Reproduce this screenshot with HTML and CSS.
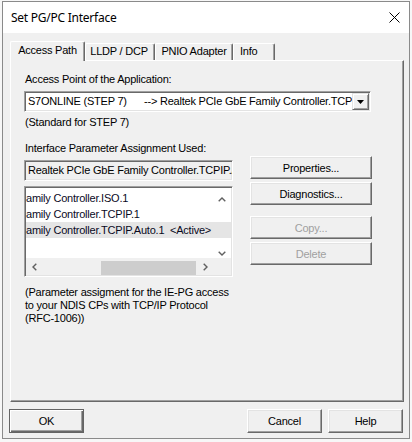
FILE: index.html
```html
<!DOCTYPE html>
<html>
<head>
<meta charset="utf-8">
<link rel="stylesheet" href="styles.css">
</head>
<body>
<div class="window">
  <div class="titlebar">
    <span class="title">Set PG/PC Interface</span>
    <svg class="close" width="11" height="11" viewBox="0 0 11 11"><path d="M0.5 0.5 L10.5 10.5 M10.5 0.5 L0.5 10.5" stroke="#000" stroke-width="1" fill="none"/></svg>
  </div>
  <div class="client">
    <div class="tabs">
      <div class="tab active tab-access">Access Path</div>
      <div class="tab tab-lldp">LLDP / DCP</div>
      <div class="tab tab-pnio">PNIO Adapter</div>
      <div class="tab tab-info">Info</div>
    </div>
    <div class="panel">
      <div class="label">Access Point of the Application:</div>
      <div class="combo">
        <div class="combo-text"><span class="combo-first">S7ONLINE (STEP 7)</span>--&gt; Realtek PCIe GbE Family Controller.TCPIP.Auto.1</div>
        <div class="combo-btn"><svg width="7" height="4" viewBox="0 0 7 4"><polygon points="0,0 7,0 3.5,4" fill="#000"/></svg></div>
      </div>
      <div class="note">(Standard for STEP 7)</div>
      <div class="label label2">Interface Parameter Assignment Used:</div>
      <div class="row">
        <div class="leftcol">
          <div class="field">Realtek PCIe GbE Family Controller.TCPIP.Auto.1</div>
          <div class="listbox">
            <div class="items">
              <div class="item">amily Controller.ISO.1</div>
              <div class="item">amily Controller.TCPIP.1</div>
              <div class="item selected">amily Controller.TCPIP.Auto.1&nbsp;&nbsp;&lt;Active&gt;</div>
            </div>
            <div class="vscroll">
              <svg width="8" height="5" viewBox="0 0 8 5"><path d="M0.7 4.3 L4 1 L7.3 4.3" stroke="#606060" stroke-width="1.4" fill="none"/></svg>
              <svg width="8" height="5" viewBox="0 0 8 5"><path d="M0.7 0.7 L4 4 L7.3 0.7" stroke="#606060" stroke-width="1.4" fill="none"/></svg>
            </div>
            <div class="hscroll">
              <svg class="harrow" width="5" height="8" viewBox="0 0 5 8"><path d="M4.3 0.7 L1 4 L4.3 7.3" stroke="#606060" stroke-width="1.4" fill="none"/></svg>
              <div class="htrack"><div class="hthumb"></div></div>
              <svg class="harrow" width="5" height="8" viewBox="0 0 5 8"><path d="M0.7 0.7 L4 4 L0.7 7.3" stroke="#606060" stroke-width="1.4" fill="none"/></svg>
            </div>
            <div class="corner"></div>
          </div>
        </div>
        <div class="rightcol">
          <div class="btn btn-props">Properties...</div>
          <div class="btn btn-diag">Diagnostics...</div>
          <div class="btn disabled btn-copy">Copy...</div>
          <div class="btn disabled btn-del">Delete</div>
        </div>
      </div>
      <div class="desc">(Parameter assigment for the IE-PG access<br>to your NDIS CPs with TCP/IP Protocol<br>(RFC-1006))</div>
    </div>
    <div class="footer">
      <div class="btn default fbtn">OK</div>
      <div class="fright">
        <div class="btn fbtn">Cancel</div>
        <div class="btn fbtn">Help</div>
      </div>
    </div>
  </div>
</div>
</body>
</html>
```

FILE: styles.css
```css
html, body {
  margin: 0;
  padding: 0;
  background: #f7f7f7;
}
body {
  width: 412px;
  height: 442px;
  overflow: hidden;
  font-family: "Liberation Sans", Arial, sans-serif;
  font-size: 11px;
  letter-spacing: -0.22px;
  color: #000;
}
.window {
  margin: 1px 0 0 2px;
  width: 408px;
  height: 438px;
  box-sizing: border-box;
  border: 1px solid #8a8a8a;
  background: #f0f0f0;
  display: flex;
  flex-direction: column;
}
.titlebar {
  height: 31px;
  flex: none;
  background: #fff;
  display: flex;
  align-items: center;
  justify-content: space-between;
  padding: 0 9px 0 8px;
}
.title {
  font-family: "Noto Sans", "Liberation Sans", sans-serif;
  font-size: 12px;
  letter-spacing: -0.25px;
  line-height: 16px;
}
.close {
  display: block;
}
.client {
  flex: 1;
  padding: 8px 0 0 7px;
}
.tabs {
  display: flex;
  align-items: flex-end;
  height: 19px;
  position: relative;
  z-index: 2;
}
.tab {
  box-sizing: border-box;
  height: 17px;
  line-height: 15px;
  text-align: center;
  background: #f0f0f0;
  border-top: 1px solid #fff;
  border-left: 1px solid #fff;
  border-right: 1px solid #696969;
  box-shadow: inset -1px 0 #a0a0a0;
  border-top-left-radius: 2px;
  border-top-right-radius: 2px;
}
.tab.active {
  height: 20px;
  margin-bottom: -1px;
  line-height: 17px;
}
.tab-access { width: 75px; }
.tab-lldp { width: 70px; padding-right: 2px; }
.tab-pnio { width: 78px; }
.tab-info { width: 42px; text-align: left; padding-left: 6px; }
.panel {
  position: relative;
  z-index: 1;
  box-sizing: border-box;
  width: 394px;
  height: 342px;
  border-top: 1px solid #fff;
  border-left: 1px solid #fff;
  border-right: 1px solid #696969;
  border-bottom: 1px solid #696969;
  box-shadow: inset -1px -1px #a0a0a0;
  padding: 12px 0 0 13px;
}
.label {
  line-height: 13px;
  padding-left: 1px;
  white-space: nowrap;
}
.label2 {
  margin-top: 13px;
}
.note {
  line-height: 13px;
  margin-top: 4px;
  padding-left: 1px;
}
.combo {
  margin-top: 5px;
  width: 347px;
  height: 21px;
  box-sizing: border-box;
  border: 1px solid;
  border-color: #a0a0a0 #fff #fff #a0a0a0;
  box-shadow: inset 1px 1px #696969, inset -1px -1px #e3e3e3;
  background: #fff;
  display: flex;
  align-items: center;
  padding: 1px 1px 1px 3px;
}
.combo-text {
  flex: 1;
  overflow: hidden;
  white-space: nowrap;
  line-height: 17px;
}
.combo-first {
  display: inline-block;
  width: 116px;
}
.combo-btn {
  flex: none;
  width: 17px;
  height: 17px;
  box-sizing: border-box;
  border: 1px solid;
  border-color: #e3e3e3 #696969 #696969 #e3e3e3;
  box-shadow: inset 1px 1px #fff, inset -1px -1px #a0a0a0;
  background: #f0f0f0;
  display: flex;
  align-items: center;
  justify-content: center;
}
.combo-btn svg { display: block; }
.row {
  display: flex;
  align-items: flex-start;
}
.leftcol {
  width: 209px;
}
.field {
  margin-top: 5px;
  height: 21px;
  box-sizing: border-box;
  border: 1px solid;
  border-color: #a0a0a0 #fff #fff #a0a0a0;
  box-shadow: inset 1px 1px #696969, inset -1px -1px #e3e3e3;
  background: #f0f0f0;
  padding: 0 2px 0 3px;
  line-height: 19px;
  white-space: nowrap;
  overflow: hidden;
}
.listbox {
  position: relative;
  margin-top: 5px;
  height: 91px;
  box-sizing: border-box;
  border: 1px solid;
  border-color: #a0a0a0 #fff #fff #a0a0a0;
  box-shadow: inset 1px 1px #696969, inset -1px -1px #e3e3e3;
  padding: 1px;
  display: grid;
  grid-template-columns: 1fr 17px;
  grid-template-rows: 1fr 17px;
}
.items {
  grid-column: 1 / 3;
  grid-row: 1;
  background: #fff;
  padding-top: 2px;
  overflow: hidden;
}
.item {
  height: 16px;
  line-height: 16px;
  white-space: nowrap;
  overflow: hidden;
  color: #0a0a1e;
}
.item.selected {
  background: #e5e5e5;
}
.vscroll {
  position: absolute;
  right: 2px;
  top: 2px;
  width: 17px;
  height: 70px;
  display: flex;
  flex-direction: column;
  align-items: center;
  justify-content: space-between;
  padding: 8px 0 3px;
  box-sizing: border-box;
}
.vscroll svg { display: block; }
.hscroll {
  grid-column: 1;
  grid-row: 2;
  background: #f0f0f0;
  display: flex;
  align-items: center;
}
.harrow {
  display: block;
  flex: none;
  margin: 0 6px;
}
.htrack {
  flex: 1;
  height: 100%;
  display: flex;
  align-items: flex-end;
}
.hthumb {
  margin-left: 58px;
  width: 95px;
  height: 14px;
  background: #cdcdcd;
}
.corner {
  grid-column: 2;
  grid-row: 2;
  background: #f0f0f0;
}
.rightcol {
  margin-left: 17px;
  width: 122px;
  display: flex;
  flex-direction: column;
}
.btn {
  box-sizing: border-box;
  height: 23px;
  border: 1px solid;
  border-color: #fff #696969 #696969 #fff;
  box-shadow: inset -1px -1px #a0a0a0, inset 1px 1px #e3e3e3;
  background: #f0f0f0;
  display: flex;
  align-items: center;
  justify-content: center;
  white-space: nowrap;
}
.btn.disabled {
  color: #a0a0a0;
}
.btn-props { margin-top: 1px; }
.btn-diag { margin-top: 3px; }
.btn-copy { margin-top: 11px; }
.btn-del { margin-top: 3px; }
.desc {
  margin-top: 9px;
  line-height: 13px;
  padding-left: 1px;
}
.footer {
  display: flex;
  justify-content: space-between;
  width: 394px;
  margin: 7px 0 0 -1px;
}
.fright {
  display: flex;
  gap: 6px;
}
.fbtn {
  width: 75px;
  height: 24px;
}
.btn.default {
  border-color: #646464;
  box-shadow: inset 1px 1px #fff, inset -1px -1px #696969, inset -2px -2px #a0a0a0;
}
```
